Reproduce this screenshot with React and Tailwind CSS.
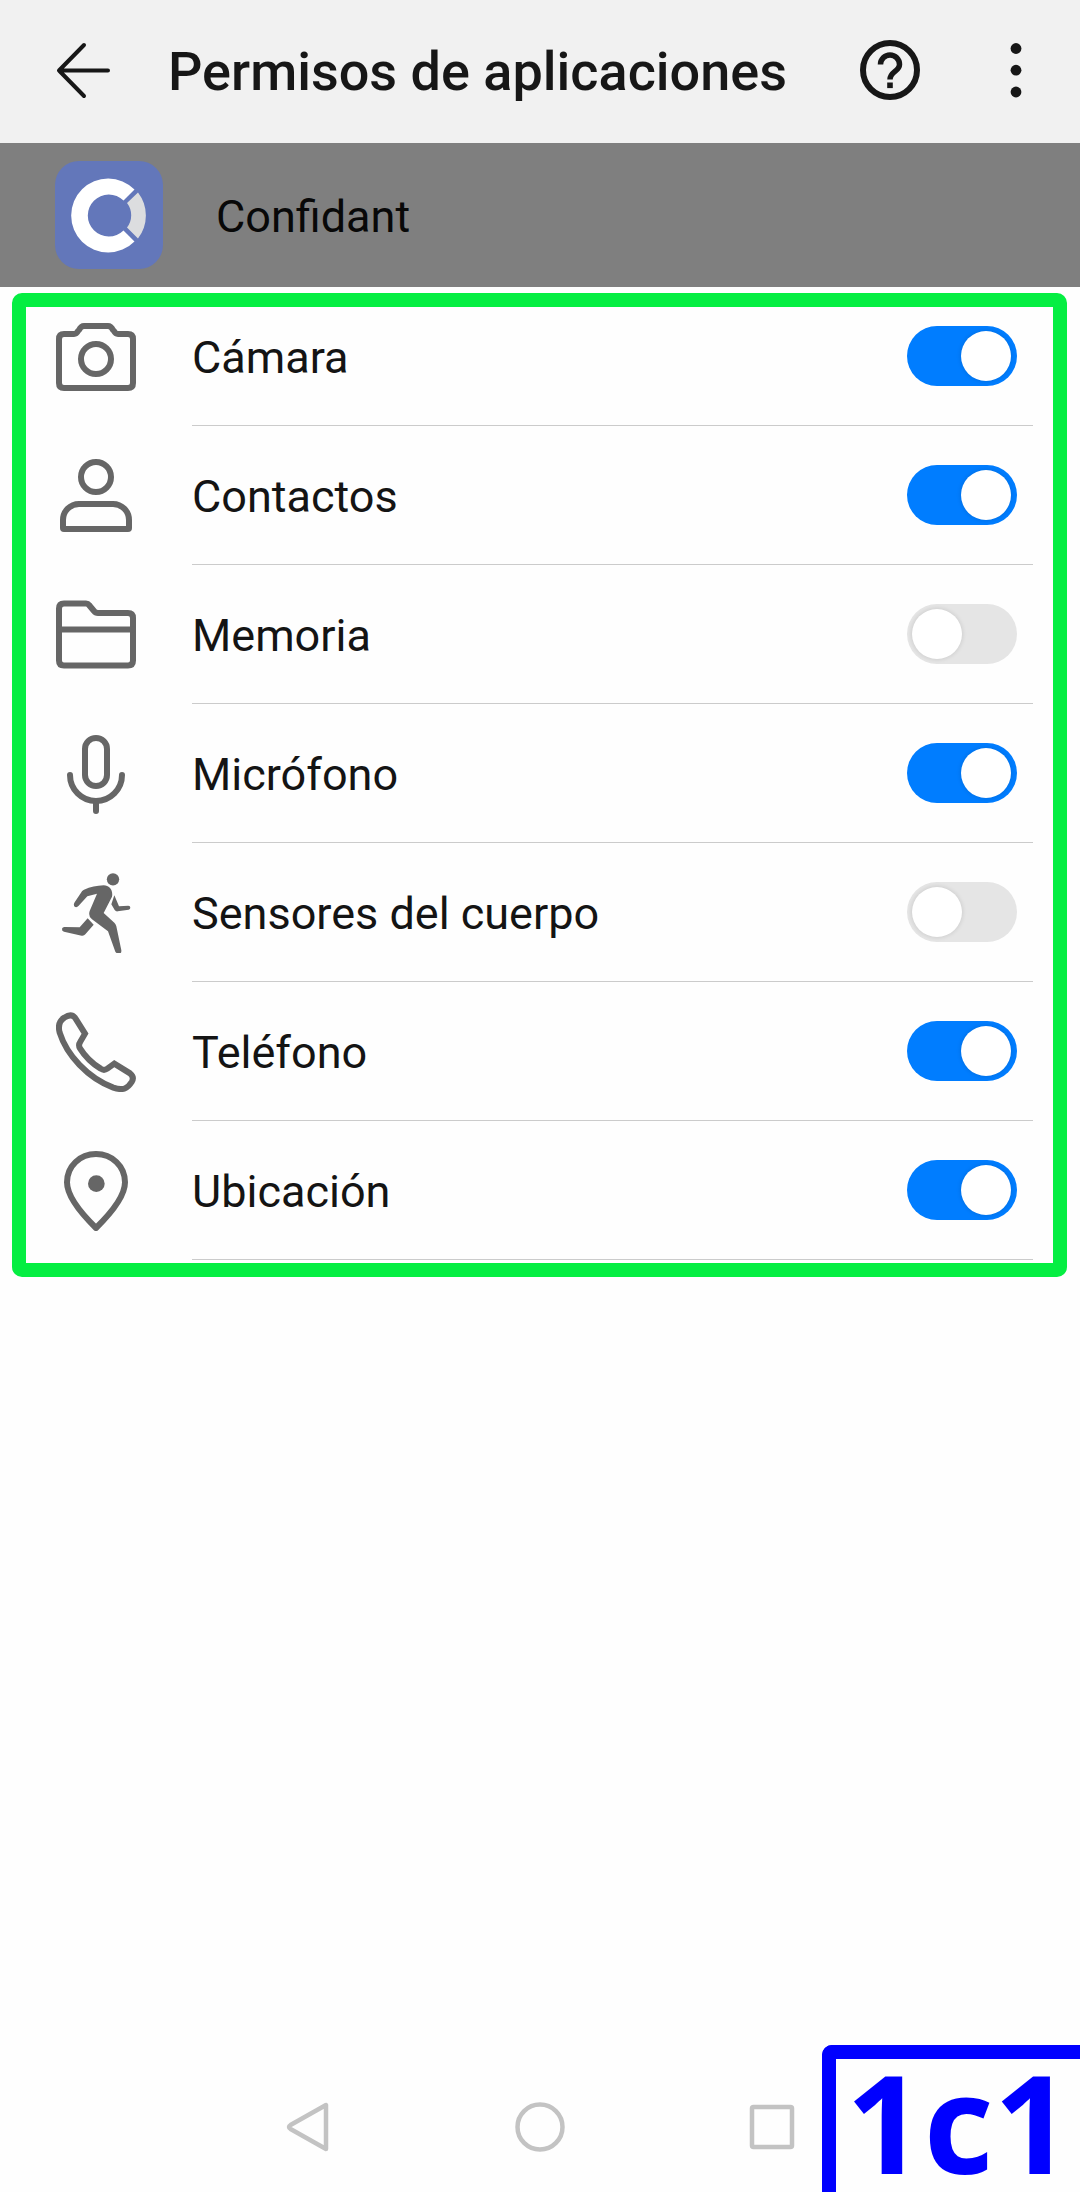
import React from "react";

const stroke = {
  fill: "none",
  stroke: "currentColor",
  strokeLinecap: "round",
  strokeLinejoin: "round",
};

const iconClass = "size-20 shrink-0 text-[#666666]";

function CameraIcon() {
  return (
    <svg viewBox="0 0 80 80" className={iconClass} strokeWidth="6" {...stroke} aria-hidden="true">
      <path d="M8 71q-5 0-5-5V22q0-5 5-5h10c2 0 3-1 4-3l1-1c1-2 2-4 5-4h24c3 0 4 2 5 4l1 1c1 2 2 3 4 3h10q5 0 5 5v44q0 5-5 5z" />
      <circle cx="40" cy="42" r="15" />
    </svg>
  );
}

function ContactsIcon() {
  return (
    <svg viewBox="0 0 80 80" className={iconClass} strokeWidth="6" {...stroke} aria-hidden="true">
      <circle cx="40" cy="21" r="15" />
      <path d="M8 73q-1 0-1-1v-8a16 16 0 0 1 16-16h34a16 16 0 0 1 16 16v8q0 1-1 1z" />
    </svg>
  );
}

function FolderIcon() {
  return (
    <svg viewBox="0 0 80 80" className={iconClass} strokeWidth="6" {...stroke} aria-hidden="true">
      <path d="M8 70.500q-5 0-5-5v-52q0-5 5-5h22q2 0 3 1.500l5 6q1.500 2 4 2h30q5 0 5 5v42.500q0 5-5 5z" />
      <path d="M4 34.500h72" />
    </svg>
  );
}

function MicIcon() {
  return (
    <svg viewBox="0 0 80 80" className={iconClass} strokeWidth="6" {...stroke} aria-hidden="true">
      <rect x="29" y="4" width="22" height="48" rx="11" />
      <path d="M14 41a26 26 0 0 0 52 0M40 67v10" />
    </svg>
  );
}

function RunnerIcon() {
  return (
    <svg viewBox="168 517 240 240" className={iconClass} fill="currentColor" aria-hidden="true">
      <circle cx="339" cy="536" r="18.500" />
      <path d="M252 567Q280 555 311 554C328 555 340 568 336 588L311 637L343 666Q347 670 349 677L364 749Q365 759 356 759Q350 759 346 753L324 692L276 656Q264 647 269 631L291 579L262 587L236 615Q230 622 224 618Q219 613 224 605L246 572Q248 569 252 567Z" />
      <path d="M343 584L357 617L385 615Q391 615 391 621Q391 626 386 627L353 632Q348 633 344 628L334 611Z" />
      <path d="M263 653L281 672L256 701Q252 706 245 705L192 693Q185 691 186 684Q188 678 195 679L239 680Z" />
    </svg>
  );
}

function PhoneIcon() {
  return (
    <svg viewBox="168 95 240 240" className={iconClass} strokeWidth="18" {...stroke} strokeLinejoin="miter" aria-hidden="true">
      <path d="M193 112C177 122 174 138 179 157C200 224 263 293 340 322C370 332 383 324 395 305Q404 290 390 279L343 250L322 265Q312 272 302 265Q263 241 240 204Q234 194 241 184L255 160L225 112Q213 98 193 112Z" />
    </svg>
  );
}

function PinIcon() {
  return (
    <svg viewBox="168 513 240 240" className={iconClass} strokeWidth="18" {...stroke} aria-hidden="true">
      <path d="M288 744C240 697 201 646 201 607C201 558 240 522 288 522S375 558 375 607C375 646 336 697 288 744Z" />
      <circle cx="289" cy="611" r="25" fill="currentColor" stroke="none" />
    </svg>
  );
}

const permissions = [
  { id: "camara", label: "Cámara", Icon: CameraIcon, on: true },
  { id: "contactos", label: "Contactos", Icon: ContactsIcon, on: true },
  { id: "memoria", label: "Memoria", Icon: FolderIcon, on: false },
  { id: "microfono", label: "Micrófono", Icon: MicIcon, on: true },
  { id: "sensores", label: "Sensores del cuerpo", Icon: RunnerIcon, on: false },
  { id: "telefono", label: "Teléfono", Icon: PhoneIcon, on: true },
  { id: "ubicacion", label: "Ubicación", Icon: PinIcon, on: true },
];

function PermissionRow({ id, label, Icon, on }) {
  return (
    <li className="flex h-[139px] items-center gap-14 pl-14">
      <Icon />
      <div className="mr-[47px] flex h-full flex-1 items-center justify-between border-b border-[#cbcbcb] pr-4">
        <label htmlFor={id} className="flex-1 pt-1 text-[45px] leading-[60px] text-[#141414]">
          {label}
        </label>
        <input
          id={id}
          type="checkbox"
          role="switch"
          defaultChecked={on}
          className="relative h-[60px] w-[110px] shrink-0 cursor-pointer appearance-none rounded-full bg-[#e5e5e5] before:absolute before:top-[5px] before:left-[5px] before:size-[50px] before:rounded-full before:bg-white before:shadow-[0_0_5px_rgba(0,0,0,0.14)] before:content-[''] checked:bg-[#007dff] checked:before:left-[54px]"
        />
      </div>
    </li>
  );
}

function Header() {
  return (
    <header className="flex h-[143px] items-center bg-[#f1f1f1] pr-[34px] pb-1 pl-14 text-[#171717]">
      <button type="button" aria-label="Atrás" className="cursor-pointer">
        <svg viewBox="0 0 56 60" className="h-[60px] w-14" strokeWidth="4" {...stroke}>
          <path d="M28 5L3 30.500L28 56M3 30.500H52" />
        </svg>
      </button>
      <h1 className="ml-14 flex-1 pt-1 text-[54px] leading-[64px] font-medium whitespace-nowrap">
        Permisos de aplicaciones
      </h1>
      <button type="button" aria-label="Ayuda" className="cursor-pointer">
        <svg viewBox="0 0 60 60" className="size-[60px]" fill="none" stroke="currentColor" strokeWidth="6">
          <circle cx="30" cy="30" r="27" />
          <path d="M20.500 24.500a9.500 9.500 0 0 1 19 0c0 7-9.500 7-9.500 15" strokeWidth="5.500" />
          <rect x="27.200" y="42.500" width="5.600" height="5.600" fill="currentColor" stroke="none" />
        </svg>
      </button>
      <button type="button" aria-label="Más opciones" className="ml-[66px] cursor-pointer">
        <svg viewBox="0 0 60 60" className="size-[60px]" fill="currentColor">
          <circle cx="30" cy="8.500" r="5.400" />
          <circle cx="30" cy="30.200" r="5.400" />
          <circle cx="30" cy="52" r="5.400" />
        </svg>
      </button>
    </header>
  );
}

function AppBanner() {
  return (
    <section className="flex h-36 items-center gap-[53px] bg-[#7f7f7f] pl-[55px]">
      <svg viewBox="0 0 108 108" className="size-[108px]" aria-hidden="true">
        <rect width="108" height="108" rx="24" fill="#6377ba" />
        <path d="M79.500 28.500A37 37 0 1 0 79.500 80.500L68.500 69.500A21 21 0 1 1 68.500 39.500Z" fill="#ffffff" />
        <path d="M83 31.500A37.500 37.500 0 0 1 83 77.500L72 66.500A20 20 0 0 0 72 42Z" fill="#dcdddf" />
      </svg>
      <h2 className="pt-1 text-[45px] leading-[60px] text-[#080808]">Confidant</h2>
    </section>
  );
}

function NavigationBar() {
  return (
    <nav className="mt-auto flex h-[130px] items-center justify-center gap-[182px] text-[#c3c3c3]">
      <button type="button" aria-label="Volver" className="cursor-pointer">
        <svg viewBox="0 0 48 52" className="h-[52px] w-12" strokeWidth="4.500" {...stroke}>
          <path d="M42 4V48L6.500 28Q3.500 26 6.500 24Z" />
        </svg>
      </button>
      <button type="button" aria-label="Inicio" className="cursor-pointer">
        <svg viewBox="0 0 52 52" className="size-[52px]" strokeWidth="4.500" {...stroke}>
          <circle cx="26" cy="26" r="22.500" />
        </svg>
      </button>
      <button type="button" aria-label="Recientes" className="cursor-pointer">
        <svg viewBox="0 0 48 52" className="h-[52px] w-12" strokeWidth="4.500" {...stroke}>
          <rect x="4" y="6" width="40" height="40" rx="1.500" />
        </svg>
      </button>
    </nav>
  );
}

export default function App() {
  return (
    <div className="relative flex min-h-screen flex-col bg-[#fefefe] font-[Roboto,sans-serif]">
      <Header />
      <AppBanner />
      <main className="relative">
        <ul>
          {permissions.map((p) => (
            <PermissionRow key={p.id} {...p} />
          ))}
        </ul>
        <div className="pointer-events-none absolute top-1.5 right-[13px] -bottom-[17px] left-3 rounded-[10px] border-[14px] border-[#05ee42]" />
      </main>
      <NavigationBar />
      <div className="absolute right-0 bottom-0 h-[147px] w-[258px] overflow-hidden rounded-tl-[10px] border-t-[14px] border-l-[14px] border-[#0000ff] bg-[#fefefe] pl-2.5 font-['Open_Sans',sans-serif] text-[136px] leading-[126px] font-bold text-[#0000ff]">
        1c1
      </div>
    </div>
  );
}
